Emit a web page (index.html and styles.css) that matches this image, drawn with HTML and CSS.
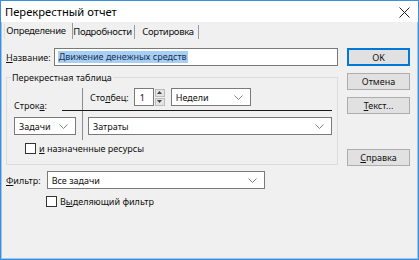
FILE: index.html
```html
<!DOCTYPE html>
<html lang="ru">
<head>
    <meta charset="UTF-8">
    <title>Перекрестный отчет</title>
    <link rel="stylesheet" href="styles.css">
</head>
<body>
    <div class="window">
        <div class="titlebar">
            <span class="title">Перекрестный отчет</span>
            <svg class="close" width="11" height="11" viewBox="0 0 11 11">
                <path d="M0.5 0.5 L10.5 10.5 M10.5 0.5 L0.5 10.5" stroke="#222" stroke-width="1" fill="none"/>
            </svg>
        </div>

        <div class="tabs">
            <div class="tab active">Определение</div>
            <div class="tab details">Подробности</div>
            <div class="tab sorting">Сортировка</div>
        </div>

        <div class="body">
            <div class="main">
                <div class="name-row">
                    <label class="label"><u>Н</u>азвание:</label>
                    <div class="input name-input"><span class="selected">Движение денежных средств</span></div>
                </div>

                <fieldset class="group">
                    <legend>Перекрестная таблица</legend>
                    <div class="cross-top">
                        <div class="row-label">Строк<u>а</u>:</div>
                        <div class="col-head">
                            <span class="label">Сто<u>л</u>бец:</span>
                            <div class="input spin-input">1</div>
                            <div class="spin">
                                <div class="spin-btn">
                                    <svg width="5" height="3" viewBox="0 0 5 3"><path d="M0 3 L2.5 0 L5 3 Z" fill="#444"/></svg>
                                </div>
                                <div class="spin-btn">
                                    <svg width="5" height="3" viewBox="0 0 5 3"><path d="M0 0 L2.5 3 L5 0 Z" fill="#444"/></svg>
                                </div>
                            </div>
                            <div class="combo week-combo">
                                <span>Недели</span>
                                <svg class="chev" width="9" height="5" viewBox="0 0 9 5"><path d="M0.5 0.5 L4.5 4.5 L8.5 0.5" stroke="#808080" fill="none"/></svg>
                            </div>
                        </div>
                    </div>
                    <div class="rule"></div>
                    <div class="cross-bottom">
                        <div class="combo row-combo">
                            <span>Задачи</span>
                            <svg class="chev" width="9" height="5" viewBox="0 0 9 5"><path d="M0.5 0.5 L4.5 4.5 L8.5 0.5" stroke="#808080" fill="none"/></svg>
                        </div>
                        <div class="value-cell">
                            <div class="combo value-combo">
                                <span>Затраты</span>
                                <svg class="chev" width="9" height="5" viewBox="0 0 9 5"><path d="M0.5 0.5 L4.5 4.5 L8.5 0.5" stroke="#808080" fill="none"/></svg>
                            </div>
                        </div>
                    </div>
                    <div class="check-row res-check">
                        <span class="box"></span>
                        <span><u>и</u> назначенные ресурсы</span>
                    </div>
                </fieldset>

                <div class="filter-row">
                    <label class="label"><u>Ф</u>ильтр:</label>
                    <div class="combo filter-combo">
                        <span>Все задачи</span>
                        <svg class="chev" width="9" height="5" viewBox="0 0 9 5"><path d="M0.5 0.5 L4.5 4.5 L8.5 0.5" stroke="#808080" fill="none"/></svg>
                    </div>
                </div>
                <div class="check-row filter-check">
                    <span class="box"></span>
                    <span>В<u>ы</u>деляющий фильтр</span>
                </div>
            </div>

            <div class="side">
                <button class="btn default">OK</button>
                <button class="btn">Отмена</button>
                <button class="btn"><u>Т</u>екст...</button>
                <button class="btn help"><u>С</u>правка</button>
            </div>
        </div>
    </div>
</body>
</html>
```

FILE: styles.css
```css
* {
    box-sizing: border-box;
}

body {
    margin: 0;
    background: #f0f0f0;
    font-family: "Noto Sans", sans-serif;
    font-size: 9px;
    color: #111;
}

u {
    text-decoration: underline;
    text-underline-offset: 1px;
}

.window {
    width: 419px;
    height: 260px;
    border: 1px solid #3b8edb;
    box-shadow: inset 1px 0 0 #9cc6ee, inset -1px 0 0 #9cc6ee, inset 0 -1px 0 #9cc6ee;
    background: #f0f0f0;
    overflow: hidden;
}

.titlebar {
    height: 21px;
    background: #fff;
    display: flex;
    align-items: center;
    justify-content: space-between;
    padding: 0 8px 0 4px;
}

.title {
    font-size: 11.2px;
    color: #000;
}

.close {
    margin-top: 2px;
}

.tabs {
    display: flex;
    height: 16px;
    margin-left: 3px;
    margin-top: 1px;
    font-size: 9.5px;
    letter-spacing: -0.3px;
}

.tab {
    display: flex;
    align-items: center;
    justify-content: center;
    margin-top: 2px;
    border-right: 1px solid #9a9a9a;
    line-height: 1;
    white-space: nowrap;
}

.tab.active {
    width: 69px;
    margin-top: 0;
    padding-right: 5px;
    border-left: 1px solid #e0e0e0;
}

.tab.details {
    width: 62px;
    padding-right: 2px;
}

.tab.sorting {
    width: 64px;
    padding-left: 3px;
}

.body {
    display: flex;
    padding: 9px 0 0 5px;
}

.main {
    width: 332px;
}

.label {
    white-space: nowrap;
}

.input,
.combo {
    background: #fff;
    border: 1px solid #7a7a7a;
    height: 18px;
    display: flex;
    align-items: center;
    padding: 0 4px;
    white-space: nowrap;
}

.name-row {
    display: flex;
    align-items: center;
    gap: 3px;
}

.name-input {
    flex: 1;
    padding-left: 3px;
}

.selected {
    background: #a6cff2;
    color: #1b2f57;
    padding: 0 1px;
    line-height: 12px;
}

.group {
    margin: 5px 0 0 0;
    padding: 0 5px 9px 7px;
    border: 1px solid #dcdcdc;
}

.group legend {
    padding: 0 1px;
    margin-left: -3px;
}

.cross-top {
    display: flex;
    margin-top: 4px;
}

.row-label {
    width: 68px;
    display: flex;
    align-items: flex-end;
    margin-bottom: -2px;
}

.col-head {
    flex: 1;
    display: flex;
    align-items: center;
    border-left: 1px solid #8c8c8c;
    padding: 0 0 4px 7px;
}

.col-head .label {
    margin-right: 5px;
}

.spin-input {
    width: 20px;
    padding-left: 5px;
}

.spin {
    display: flex;
    flex-direction: column;
    justify-content: center;
    gap: 1px;
    height: 18px;
    margin-left: 1px;
}

.spin-btn {
    width: 10px;
    height: 8px;
    background: #e4e4e4;
    border: 1px solid #bcbcbc;
    display: flex;
    align-items: center;
    justify-content: center;
}

.combo {
    justify-content: space-between;
    padding-right: 7px;
}

.week-combo {
    width: 80px;
    margin-left: 6px;
}

.rule {
    height: 1px;
    background: #1a1a1a;
    margin-left: 48px;
}

.cross-bottom {
    display: flex;
}

.row-combo {
    width: 62px;
    margin: 6px 6px 0 0;
}

.value-cell {
    flex: 1;
    border-left: 1px solid #8c8c8c;
    padding: 6px 0 5px 5px;
}

.check-row {
    display: flex;
    align-items: center;
    gap: 3px;
}

.box {
    width: 11px;
    height: 11px;
    border: 1px solid #333;
    background: #fff;
}

.res-check {
    margin: 2px 0 0 11px;
}

.filter-row {
    display: flex;
    align-items: center;
    gap: 6px;
    margin-top: 6px;
}

.filter-combo {
    width: 218px;
}

.filter-check {
    margin: 6px 0 0 40px;
}

.side {
    display: flex;
    flex-direction: column;
    gap: 7px;
    margin-left: 9px;
}

.btn {
    width: 63px;
    height: 17px;
    background: #e1e1e1;
    border: 1px solid #adadad;
    font-family: inherit;
    font-size: 9px;
    padding: 0;
    color: #111;
}

.btn.default {
    height: 18px;
    border: 2px solid #0078d7;
}

.btn.help {
    margin-top: 28px;
}
```
